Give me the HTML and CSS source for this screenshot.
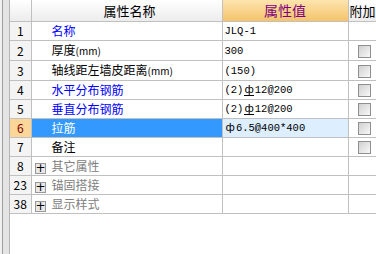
FILE: index.html
```html
<!DOCTYPE html>
<html>
<head>
<meta charset="utf-8">
<link rel="stylesheet" href="styles.css">
</head>
<body>
<div class="frame">
  <div class="strip"></div>
  <div class="grid">
    <table class="props">
      <colgroup>
        <col class="c-num"><col class="c-name"><col class="c-val"><col class="c-add">
      </colgroup>
      <thead>
        <tr>
          <th class="h-num"></th>
          <th class="h-name">属性名称</th>
          <th class="h-val">属性值</th>
          <th class="h-add">附加</th>
        </tr>
      </thead>
      <tbody>
        <tr><td class="num">1</td><td class="name blue">名称</td><td class="val">JLQ-1</td><td class="add"></td></tr>
        <tr><td class="num">2</td><td class="name">厚度<span class="unit">(mm)</span></td><td class="val">300</td><td class="add"><span class="chk"></span></td></tr>
        <tr><td class="num">3</td><td class="name">轴线距左墙皮距离<span class="unit">(mm)</span></td><td class="val">(150)</td><td class="add"><span class="chk"></span></td></tr>
        <tr><td class="num">4</td><td class="name blue">水平分布钢筋</td><td class="val">(2)<span class="rb rb3">ф</span>12@200</td><td class="add"><span class="chk"></span></td></tr>
        <tr><td class="num">5</td><td class="name blue">垂直分布钢筋</td><td class="val">(2)<span class="rb rb3">ф</span>12@200</td><td class="add"><span class="chk"></span></td></tr>
        <tr class="sel"><td class="num">6</td><td class="name">拉筋</td><td class="val"><span class="rb">ф</span>6.5@400*400</td><td class="add"><span class="chk"></span></td></tr>
        <tr><td class="num">7</td><td class="name">备注</td><td class="val"></td><td class="add"><span class="chk"></span></td></tr>
        <tr class="grp"><td class="num">8</td><td class="name"><span class="plus">+</span>其它属性</td><td class="val"></td><td class="add"></td></tr>
        <tr class="grp"><td class="num">23</td><td class="name"><span class="plus">+</span>锚固搭接</td><td class="val"></td><td class="add"></td></tr>
        <tr class="grp"><td class="num">38</td><td class="name"><span class="plus">+</span>显示样式</td><td class="val"></td><td class="add"></td></tr>
      </tbody>
    </table>
  </div>
</div>
</body>
</html>
```
FILE: styles.css
```css
html, body {
  margin: 0;
  padding: 0;
  background: #ffffff;
  overflow: hidden;
}
body {
  font-family: "Noto Sans CJK SC", "DejaVu Sans", sans-serif;
  font-size: 12px;
  color: #000;
  width: 376px;
  height: 254px;
}
.frame {
  display: flex;
  height: 254px;
  background: #f0f0f0;
  padding-left: 2px;
}
.strip {
  width: 6px;
  flex: none;
  background: #e4e4e4;
  border-left: 1px solid #a0a0a0;
  border-right: 1px solid #b4b4b4;
}
.grid {
  flex: 1;
  background: #ffffff;
  overflow: hidden;
}
.props {
  border-collapse: collapse;
  table-layout: fixed;
  width: 400px;
}
.c-num { width: 21px; }
.c-name { width: 191px; }
.c-val { width: 126px; }
.c-add { width: 62px; }
.props th, .props td {
  padding: 0;
  border-right: 1px solid #c0c0c0;
  border-bottom: 1px solid #c0c0c0;
  white-space: nowrap;
  overflow: hidden;
  line-height: 18px;
  height: 18px;
}
.props th {
  height: 21px;
  line-height: 21px;
  font-weight: normal;
  font-size: 13px;
  background: linear-gradient(#ffffff, #ececec);
}
.props th.h-val {
  background: linear-gradient(#fde4ae, #f4c36a);
  color: #800080;
  font-size: 14px;
}
.props th.h-add {
  text-align: left;
  padding-left: 1px;
}
.props th.h-name { padding-left: 6px; }
.num {
  text-align: center;
  background: #f4f4f4;
}
.name { padding-left: 20px !important; }
.val {
  padding-left: 2px !important;
  font-family: "Liberation Mono", "DejaVu Sans Mono", monospace;
  font-size: 10.5px;
}
.rb {
  display: inline-block;
  font-family: "DejaVu Sans", sans-serif;
  font-size: 11px;
  line-height: 11px;
  margin: 0 1px;
}
.rb3 {
  border-bottom: 1px solid #000;
}
.add { text-align: left; }
.blue { color: #0000ff; }
.unit { font-size: 10px; }
.chk {
  display: inline-block;
  width: 11px;
  height: 11px;
  margin-left: 9px;
  vertical-align: -2px;
  border: 1px solid #8f8f8f;
  background: linear-gradient(135deg, #d0d0d0, #f8f8f8);
}
.sel .num {
  background: #fbd699;
  color: #800000;
}
.sel .name {
  background: #3399ff;
  color: #ffffff;
}
.sel .val {
  background: #ddeeff;
}
.grp .name {
  color: #808080;
  padding-left: 3px !important;
}
.plus {
  display: inline-block;
  width: 9px;
  height: 9px;
  line-height: 9px;
  border: 1px solid #999;
  background: #e8e8e8;
  color: #000;
  font-size: 12px;
  text-align: center;
  margin-right: 6px;
  vertical-align: -1px;
  font-family: "DejaVu Sans", sans-serif;
}
```
